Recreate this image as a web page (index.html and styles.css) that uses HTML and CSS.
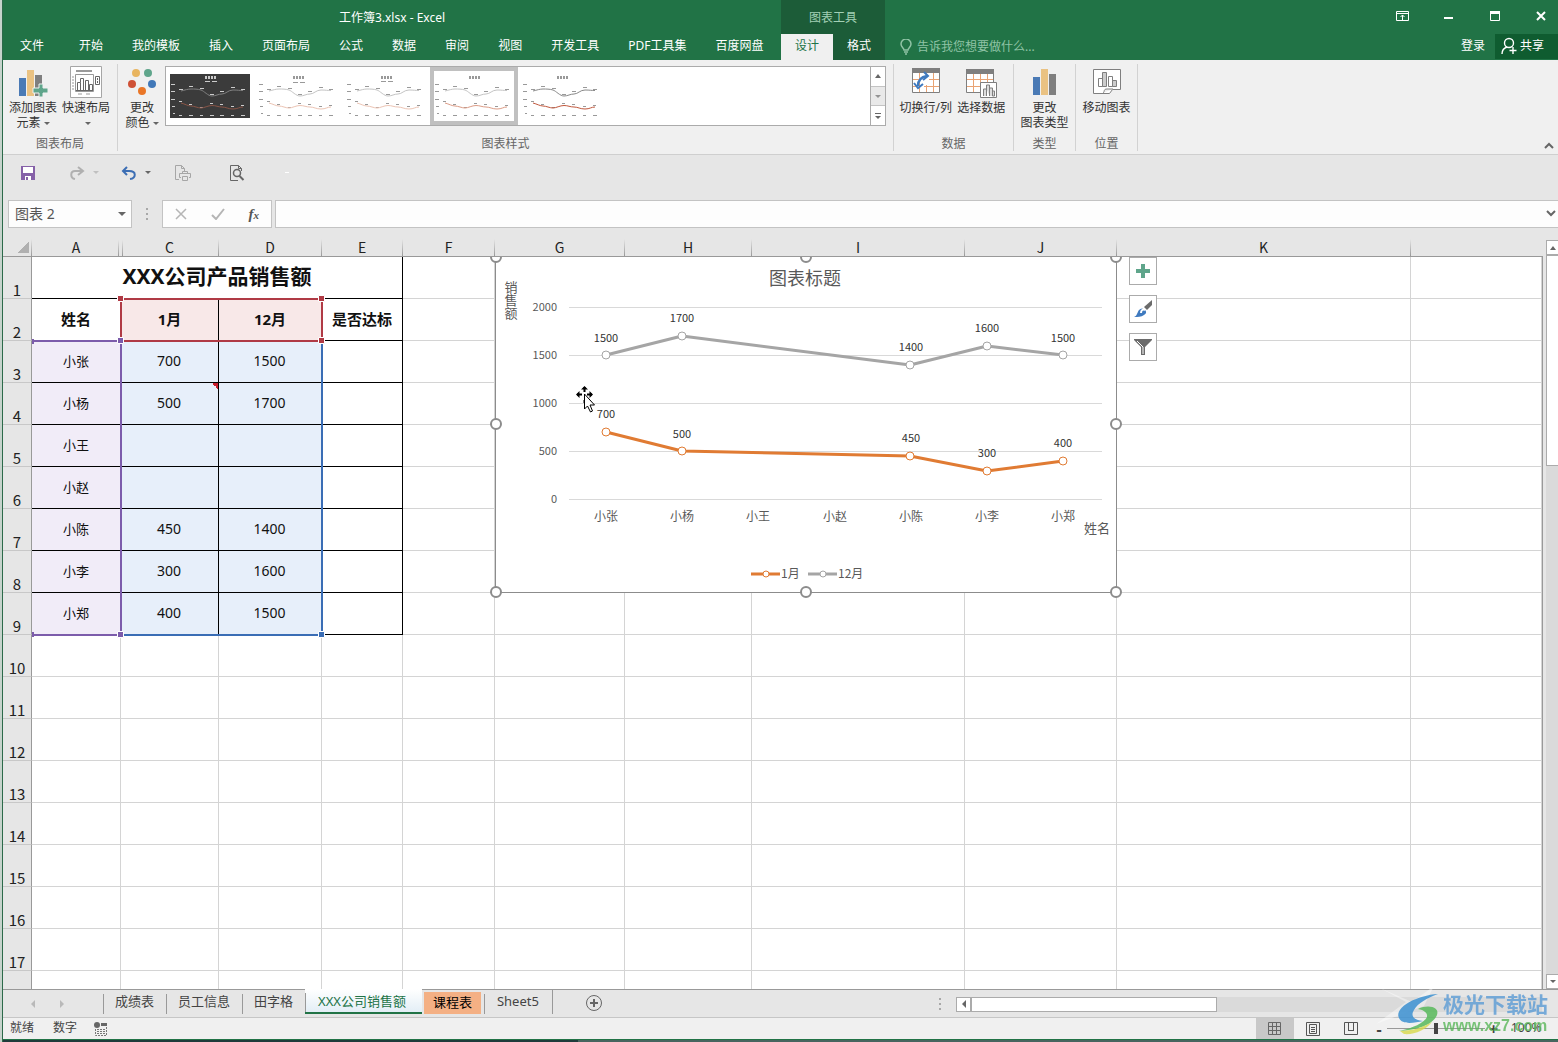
FILE: index.html
```html
<!DOCTYPE html>
<html lang="zh-CN">
<head>
<meta charset="utf-8">
<meta name="viewport" content="width=device-width, initial-scale=1">
<title>工作簿3.xlsx - Excel</title>
<link rel="stylesheet" href="styles.css">
</head>
<body>
<svg class="defs" aria-hidden="true">
  <symbol id="thumb-lines" viewBox="0 0 80 44">
    <g class="thumb-dash">
      <path d="M9 15.500h4M19 12.500h4M30 14.500h4M40 20.500h4M50 17.500h4M61 13.500h4M71 15.500h4"/>
      <path d="M9 27.500h3M19 30.500h3M30 33.500h3M40 29.500h3M50 30.500h3M61 32.500h3M71 31.500h3"/>
      <path d="M9 41.500h3M19 41.500h4M30 41.500h3M40 41.500h4M50 41.500h4M61 41.500h3M71 41.500h4"/>
      <path d="M1 10.500h4M1 17.500h4M1 25.500h4M2 32.500h3M3 39.500h2"/>
    </g>
    <path class="thumb-title" stroke-dasharray="2 1" d="M35 3.500h11"/>
    <path class="thumb-grey" d="M11 17C15 16 18 15 21 15S28 15 31 16S38 22 42 22S48 20 52 20S58 16 63 16S69 16.500 73 16.500"/>
    <path class="thumb-red" d="M11 29C15 30 18 32 21 32S28 34 31 34S38 31.500 42 31.500S48 33 52 33S58 35 63 35S69 33 73 33"/>
  </symbol>
  <symbol id="bars" viewBox="0 0 30 30"><path fill="#4a7ab5" d="M1 11h7v18H1z"/><path fill="#eac282" d="M9 3h7v26H9z"/><path fill="#7f7f7f" d="M17 8h7v21h-7z"/></symbol>
</svg>

<div class="window">
  <header class="titlebar">
    <div class="title-main">
      <h1 class="doc-title">工作簿3.xlsx - Excel</h1>
      <nav class="menu">
        <button class="menu-tab file">文件</button><button class="menu-tab">开始</button><button class="menu-tab">我的模板</button><button class="menu-tab">插入</button><button class="menu-tab">页面布局</button><button class="menu-tab">公式</button><button class="menu-tab">数据</button><button class="menu-tab">审阅</button><button class="menu-tab">视图</button><button class="menu-tab">开发工具</button><button class="menu-tab">PDF工具集</button><button class="menu-tab">百度网盘</button>
      </nav>
    </div>
    <div class="context">
      <div class="context-title">图表工具</div>
      <nav class="context-tabs"><button class="context-tab active">设计</button><button class="context-tab">格式</button></nav>
    </div>
    <div class="title-side">
      <div class="win-controls">
        <button aria-label="功能区显示选项"><svg width="16" height="16" viewBox="0 0 16 16" fill="none" stroke="#fff"><path d="M1.500 3.500h12v9h-12zM1 5.500h12M7.500 12V7M5.500 9l2-2 2 2"/></svg></button>
        <button aria-label="最小化"><svg width="16" height="16" viewBox="0 0 16 16"><path fill="#fff" d="M3 9h9v2H3z"/></svg></button>
        <button aria-label="最大化"><svg width="16" height="16" viewBox="0 0 16 16"><path d="M3.500 3.500h9v9h-9z" fill="none" stroke="#fff"/><path fill="#fff" d="M3 3h10v3H3z"/></svg></button>
        <button aria-label="关闭"><svg width="16" height="16" viewBox="0 0 16 16"><path d="M4 4l8 8M12 4l-8 8" stroke="#fff" stroke-width="2"/></svg></button>
      </div>
      <div class="account">
        <button class="tell-me"><svg width="12" height="16" viewBox="0 0 12 16" fill="none" stroke="#8fc3a5" stroke-width="1.500"><path d="M4 11c0-2-3-3-3-6a5 5 0 0 1 10 0c0 3-3 4-3 6zM4 13h4M5 15h2"/></svg>告诉我您想要做什么...</button>
        <button class="login">登录</button>
        <button class="share"><svg width="16" height="18" viewBox="0 0 16 18" fill="none" stroke="#fff" stroke-width="1.400"><circle cx="8" cy="6" r="4.500"/><path d="M1 17c0-4 2-6 5-7M12 10v7M8.500 13.500h7"/></svg>共享</button>
      </div>
    </div>
  </header>

  <section class="ribbon" aria-label="图表工具 设计">
    <div class="group layout-group">
      <div class="group-body">
        <button class="cmd w54"><svg width="30" height="32" viewBox="0 0 30 32"><use href="#bars" y="1" width="30" height="30"/><path d="M17 22h6v-4h4v4h5v5h-5v4h-4v-4h-6z" transform="translate(-2 0)" fill="#5fa58b" stroke="#f0f0f0"/></svg><span>添加图表<br>元素 <i class="caret"></i></span></button>
        <button class="cmd w52"><svg width="32" height="32" viewBox="0 0 32 32" fill="none"><path d="M.500.500h31v31H.500z" fill="#fff" stroke="#a6a6a6"/><path d="M6 5h16" stroke="#9a9a9a" stroke-width="2"/><path d="M5.500 8.500h18v17h-18zM2 11h2M2 14h2M2 17h2M2 20h2M2 23h2M8 28h4M16 28h4" stroke="#999"/><path d="M7.500 24.500v-8h3v8M10.500 16.500v-4h3v12M15.500 24.500v-10h3v10M19.500 24.500v-6h3v6zM6 24.500h17" stroke="#666"/><path d="M25.500 10.500h4v8h-4z" stroke="#666"/><path d="M27 12h1v2h-1zM27 15h1v2h-1z" fill="#666"/></svg><span>快速布局<br>&nbsp;<i class="caret"></i></span></button>
      </div>
      <div class="group-name">图表布局</div>
    </div>
    <div class="group style-group">
      <div class="group-body">
        <button class="cmd w40"><svg width="30" height="32" viewBox="0 0 30 32"><circle cx="9" cy="7" r="4" fill="#e8b560"/><circle cx="21" cy="7" r="4" fill="#5fa58b"/><circle cx="5" cy="18" r="4" fill="#cf5136"/><circle cx="25" cy="18" r="4" fill="#4178b8"/><circle cx="15" cy="25" r="4" fill="#e97627"/></svg><span>更改<br>颜色 <i class="caret"></i></span></button>
        <div class="gallery">
          <button class="style-item dark" aria-label="样式 1"><svg width="80" height="44"><use href="#thumb-lines"/><path class="thumb-dash" d="M35 7.500h5M42 7.500h5"/></svg></button>
          <button class="style-item" aria-label="样式 2"><svg width="80" height="44"><use href="#thumb-lines"/><path class="thumb-dash" d="M35 8.500h5M42 8.500h5"/></svg></button>
          <button class="style-item" aria-label="样式 3"><svg width="80" height="44"><use href="#thumb-lines"/><path class="thumb-dash" d="M35 7.500h5M42 7.500h5"/></svg></button>
          <button class="style-item selected" aria-label="样式 4"><svg width="80" height="44"><use href="#thumb-lines"/></svg></button>
          <button class="style-item strong" aria-label="样式 5"><svg width="80" height="44"><use href="#thumb-lines"/></svg></button>
          <div class="gallery-nav">
            <button aria-label="上一行"><i class="caret up"></i></button>
            <button class="off" aria-label="下一行"><i class="caret"></i></button>
            <button class="more" aria-label="更多"><i class="caret"></i></button>
          </div>
        </div>
      </div>
      <div class="group-name">图表样式</div>
    </div>
    <div class="group data-group">
      <div class="group-body">
        <button class="cmd w56"><svg width="30" height="32" viewBox="0 0 30 32" fill="none"><path d="M1.500 3.500h27v23h-27z" fill="#fff" stroke="#7f7f7f"/><path d="M1 2h28v5H1z" fill="#7f7f7f"/><path d="M8.500 7v19M15.500 7v3M15.500 19v7M22.500 7v19M2 13.500h8M18 13.500h10M2 20.500h4M13 20.500h15" stroke="#e9a374"/><path d="M7 20C7 14 10 11 16 10" stroke="#3f7abf" stroke-width="2.500"/><path d="M13 6l4 4-5 4M3 17l4 5 5-4" stroke="#3f7abf" stroke-width="2"/></svg><span>切换行/列</span></button>
        <button class="cmd w56"><svg width="32" height="32" viewBox="0 0 32 32" fill="none"><path d="M1.500 3.500h27v23h-27z" fill="#fff" stroke="#7f7f7f"/><path d="M1 3h28v5H1z" fill="#7f7f7f"/><path d="M8.500 8v18M15.500 8v18M22.500 8v8M2 13.500h26M2 20.500h13" stroke="#e9a374"/><path d="M15.500 16.500h16v15h-16z" fill="#fff" stroke="#7f7f7f"/><path d="M18.500 30v-7h3v7M21.500 23v-4h3v11M24.500 30v-8h3v8M27.500 30v-5h2v5z" fill="#ddd" stroke="#7f7f7f"/></svg><span>选择数据</span></button>
      </div>
      <div class="group-name">数据</div>
    </div>
    <div class="group type-group">
      <div class="group-body">
        <button class="cmd w56"><svg width="26" height="32" viewBox="0 0 26 32"><use href="#bars" width="30" height="30" y="0"/></svg><span>更改<br>图表类型</span></button>
      </div>
      <div class="group-name">类型</div>
    </div>
    <div class="group place-group">
      <div class="group-body">
        <button class="cmd w56"><svg width="30" height="32" viewBox="0 0 30 32" fill="none" stroke="#7f7f7f"><path d="M1.500 3.500h27v20h-8l-3 4h-16z" fill="#fff"/><path d="M11 27c2-1 0-4 4-4h6" fill="#eee"/><path d="M6.500 12.500h4v8h-4zM16.500 10.500h4v10h-4z" fill="#fff"/><path d="M10.500 6.500h4v14h-4zM20.500 14.500h4v6h-4z" fill="#ccc"/></svg><span>移动图表</span></button>
      </div>
      <div class="group-name">位置</div>
    </div>
    <button class="collapse" aria-label="折叠功能区"><svg width="10" height="8" viewBox="0 0 10 8"><path d="M1 6l4-4 4 4" fill="none" stroke="#666" stroke-width="2"/></svg></button>
  </section>

  <div class="quick" role="toolbar" aria-label="快速访问工具栏">
    <button class="q-save" aria-label="保存"><svg width="14" height="14" viewBox="0 0 14 14"><path fill="#8661a8" d="M0 0h14v14H0z"/><path fill="#fff" d="M2 1h10v6H2zM4 10h6v4H4z"/><path fill="#8661a8" d="M5 11h2v3H5z"/></svg></button>
    <button class="q-redo" aria-label="重做"><svg width="16" height="14" viewBox="0 0 16 14" fill="none" stroke="#b0b0b0" stroke-width="2"><path d="M9 1l5 4-5 4M14 5H6C1 5 1 12 6 13"/></svg><i class="caret faint"></i></button>
    <button class="q-undo" aria-label="撤消"><svg width="16" height="14" viewBox="0 0 16 14" fill="none" stroke="#3c6eb4" stroke-width="2"><path d="M6 1L2 5l4 4M2 5h6c8 0 7 7 1 8"/></svg><i class="caret"></i></button>
    <button class="q-print" aria-label="快速打印"><svg width="16" height="16" viewBox="0 0 16 16" fill="none" stroke="#a6a6a6"><path d="M4 14.500H.500V.500h6l3 3V6M6.500.500v3h3M7.500 9V6.500h5V9M6 12.500H4.500v-4h11v4H14M7.500 11.500h5v4h-5z"/></svg></button>
    <button class="q-view" aria-label="打印预览"><svg width="16" height="16" viewBox="0 0 16 16" fill="none" stroke="#666"><path d="M9 15.500H1.500V.500h8l3 3V6M9.500.500v3h3"/><circle cx="8" cy="8" r="3.500" stroke-width="1.500"/><path d="M10.500 11l4 4" stroke-width="2"/></svg></button>
    <span class="q-more"></span>
  </div>

  <div class="formula-bar">
    <label class="name-box"><input aria-label="名称框" value="图表 2"><i class="caret"></i></label>
    <span class="dots"></span>
    <div class="fx-buttons">
      <button aria-label="取消"><svg width="12" height="12" viewBox="0 0 12 12"><path d="M1 1l10 10M11 1L1 11" stroke="#b5b5b5" stroke-width="1.500"/></svg></button>
      <button aria-label="输入"><svg width="14" height="12" viewBox="0 0 14 12"><path d="M1 7l4 4 8-10" fill="none" stroke="#b5b5b5" stroke-width="2"/></svg></button>
      <button aria-label="插入函数" class="fx">f<sub>x</sub></button>
    </div>
    <div class="formula"><input aria-label="编辑栏"><svg width="10" height="8" viewBox="0 0 10 8"><path d="M1 1l4 4 4-4" fill="none" stroke="#666" stroke-width="2"/></svg></div>
  </div>

  <main class="sheet">
    <div class="pane">
      <table class="grid">
        <colgroup><col class="c-head"><col class="c-a"><col class="c-c"><col class="c-d"><col class="c-e"><col class="c-f"><col class="c-g"><col class="c-h"><col class="c-i"><col class="c-j"><col class="c-k"><col></colgroup>
        <thead><tr><th class="corner"></th><th class="hidden-next">A</th><th>C</th><th>D</th><th>E</th><th>F</th><th>G</th><th>H</th><th>I</th><th>J</th><th>K</th><th class="last"></th></tr></thead>
        <tbody>
          <tr class="r-title"><th>1</th><td colspan="4" class="b">XXX公司产品销售额</td><td></td><td></td><td></td><td></td><td></td><td></td><td></td></tr>
          <tr class="r-head"><th>2</th><td class="b">姓名</td><td class="b red">1月</td><td class="b red">12月</td><td class="b">是否达标</td><td></td><td></td><td></td><td></td><td></td><td></td><td></td></tr>
          <tr><th>3</th><td class="b name">小张</td><td class="b num">700</td><td class="b num">1500</td><td class="b"></td><td></td><td></td><td></td><td></td><td></td><td></td><td></td></tr>
          <tr><th>4</th><td class="b name">小杨</td><td class="b num note">500</td><td class="b num">1700</td><td class="b"></td><td></td><td></td><td></td><td></td><td></td><td></td><td></td></tr>
          <tr><th>5</th><td class="b name">小王</td><td class="b num"></td><td class="b num"></td><td class="b"></td><td></td><td></td><td></td><td></td><td></td><td></td><td></td></tr>
          <tr><th>6</th><td class="b name">小赵</td><td class="b num"></td><td class="b num"></td><td class="b"></td><td></td><td></td><td></td><td></td><td></td><td></td><td></td></tr>
          <tr><th>7</th><td class="b name">小陈</td><td class="b num">450</td><td class="b num">1400</td><td class="b"></td><td></td><td></td><td></td><td></td><td></td><td></td><td></td></tr>
          <tr><th>8</th><td class="b name">小李</td><td class="b num">300</td><td class="b num">1600</td><td class="b"></td><td></td><td></td><td></td><td></td><td></td><td></td><td></td></tr>
          <tr><th>9</th><td class="b name">小郑</td><td class="b num">400</td><td class="b num">1500</td><td class="b"></td><td></td><td></td><td></td><td></td><td></td><td></td><td></td></tr>
          <tr><th>10</th><td></td><td></td><td></td><td></td><td></td><td></td><td></td><td></td><td></td><td></td><td></td></tr>
          <tr><th>11</th><td></td><td></td><td></td><td></td><td></td><td></td><td></td><td></td><td></td><td></td><td></td></tr>
          <tr><th>12</th><td></td><td></td><td></td><td></td><td></td><td></td><td></td><td></td><td></td><td></td><td></td></tr>
          <tr><th>13</th><td></td><td></td><td></td><td></td><td></td><td></td><td></td><td></td><td></td><td></td><td></td></tr>
          <tr><th>14</th><td></td><td></td><td></td><td></td><td></td><td></td><td></td><td></td><td></td><td></td><td></td></tr>
          <tr><th>15</th><td></td><td></td><td></td><td></td><td></td><td></td><td></td><td></td><td></td><td></td><td></td></tr>
          <tr><th>16</th><td></td><td></td><td></td><td></td><td></td><td></td><td></td><td></td><td></td><td></td><td></td></tr>
          <tr><th>17</th><td></td><td></td><td></td><td></td><td></td><td></td><td></td><td></td><td></td><td></td><td></td></tr>
          <tr><th></th><td></td><td></td><td></td><td></td><td></td><td></td><td></td><td></td><td></td><td></td><td></td></tr>
        </tbody>
      </table>

      <div class="canvas">
        <!-- chart source ranges: names, series titles, values -->
        <svg class="ranges" width="330" height="390" viewBox="0 0 330 390" aria-hidden="true">
          <g fill="none" stroke-width="2">
            <path stroke="#3a6db5" d="M119 378h200V85"/>
            <path stroke="#7c5cab" d="M30 84h88v294H30"/>
            <path stroke="#b03a45" d="M118 42h201v42H118z"/>
          </g>
          <g stroke="#fff">
            <path fill="#b03a45" d="M114.500 38.500h6v6h-6zM315.500 38.500h6v6h-6zM315.500 80.500h6v6h-6z"/>
            <path fill="#7c5cab" d="M114.500 80.500h6v6h-6zM114.500 374.500h6v6h-6z"/>
            <path fill="#3a6db5" d="M315.500 374.500h6v6h-6z"/>
          </g>
          <path fill="#7c5cab" d="M29 82h2v5h-2zM29 375h2v5h-2z"/>
        </svg>

        <svg class="chart" width="622" height="336" viewBox="0 0 622 336" role="img" aria-label="图表标题">
          <path d="M.500-2h621v337.500H.500z" fill="#fff" stroke="#8c8c8c"/>
          <path d="M74 50.500h533M74 98.500h533M74 146.500h533M74 194.500h533M74 242.500h533" stroke="#d9d9d9"/>
          <g fill="none" stroke-width="3" stroke-linejoin="round">
            <path stroke="#a5a5a5" d="M111 98L187 79L415 108L492 89L568 98M313 317h29"/>
            <path stroke="#e07b33" d="M111 175L187 194L415 199L492 214L568 204M256 317h29"/>
          </g>
          <g fill="#fff" stroke="#a5a5a5">
            <circle cx="111" cy="98" r="4"/><circle cx="187" cy="79" r="4"/><circle cx="415" cy="108" r="4"/><circle cx="492" cy="89" r="4"/><circle cx="568" cy="98" r="4"/><circle cx="328" cy="317" r="3"/>
          </g>
          <g fill="#fff" stroke="#e07b33">
            <circle cx="111" cy="175" r="4"/><circle cx="187" cy="194" r="4"/><circle cx="415" cy="199" r="4"/><circle cx="492" cy="214" r="4"/><circle cx="568" cy="204" r="4"/><circle cx="271" cy="317" r="3"/>
          </g>
          <text class="ct-title" x="310" y="28">图表标题</text>
          <g class="ct-y"><text x="62" y="54">2000</text><text x="62" y="102">1500</text><text x="62" y="150">1000</text><text x="62" y="198">500</text><text x="62" y="246">0</text></g>
          <g class="ct-x"><text x="111" y="264">小张</text><text x="187" y="264">小杨</text><text x="263" y="264">小王</text><text x="340" y="264">小赵</text><text x="416" y="264">小陈</text><text x="492" y="264">小李</text><text x="568" y="264">小郑</text></g>
          <g class="ct-label">
            <text x="111" y="85">1500</text><text x="187" y="65">1700</text><text x="416" y="94">1400</text><text x="492" y="75">1600</text><text x="568" y="85">1500</text>
            <text x="111" y="161">700</text><text x="187" y="181">500</text><text x="416" y="185">450</text><text x="492" y="200">300</text><text x="568" y="190">400</text>
          </g>
          <g class="ct-axis"><text class="ct-vertical" x="16" y="24">销售额</text><text x="589" y="276">姓名</text></g>
          <g class="ct-legend"><text x="286" y="321">1月</text><text x="343" y="321">12月</text></g>
          <g fill="#fff" stroke="#8c8c8c" stroke-width="2">
            <circle cx="1" cy="0" r="5"/><circle cx="311" cy="0" r="5"/><circle cx="621" cy="0" r="5"/><circle cx="1" cy="167" r="5"/><circle cx="621" cy="167" r="5"/><circle cx="1" cy="335" r="5"/><circle cx="311" cy="335" r="5"/><circle cx="621" cy="335" r="5"/>
          </g>
        </svg>

        <div class="chart-tools">
          <button aria-label="图表元素"><svg width="16" height="16" viewBox="0 0 16 16"><path fill="#5fa58b" d="M6 1h4v5h5v4h-5v5H6v-5H1V6h5z"/></svg></button>
          <button aria-label="图表样式"><svg width="20" height="20" viewBox="0 0 20 20"><path fill="#6b6b6b" d="M19 1v5l-5 5-3-3z"/><path fill="#3f7abf" d="M1 18c3-1 3-4 5-7 2-2 4-2 6 0s1 4-1 5c-3 2-6 2-10 2z"/><path d="M8 14c0-3 2-4 4-3" fill="none" stroke="#fff" stroke-width="2"/></svg></button>
          <button aria-label="图表筛选器"><svg width="20" height="20" viewBox="0 0 20 20"><path fill="#6b6b6b" d="M1 2h18v1l-7 7v8H8v-8L1 3z"/><path d="M4 4l6 6v7" fill="none" stroke="#fff"/></svg></button>
        </div>

        <svg class="cursor" width="20" height="28" viewBox="0 0 20 28" aria-hidden="true"><path d="M8.500 1v5M8.500 14v3M1 8.500h5M11 8.500h5" stroke="#000" stroke-width="2"/><path d="M5 3.500L8.500 0 12 3.500zM3.500 5L0 8.500 3.500 12zM13.500 5l3.500 3.500-3.500 3.500z"/><path d="M8.500 8v15l3-3 3 6 2-1-2.500-6h4.500z" fill="#fff" stroke="#000"/></svg>
      </div>
    </div>
    <div class="vscroll">
      <button aria-label="向上滚动"><i class="caret up"></i></button>
      <div class="v-thumb"></div>
      <button class="v-down" aria-label="向下滚动"><i class="caret"></i></button>
    </div>
  </main>

  <div class="tabs-row">
    <div class="tab-nav"><button aria-label="上一工作表"><i class="caret left"></i></button><button aria-label="下一工作表"><i class="caret right"></i></button></div>
    <nav class="sheet-tabs">
      <button>成绩表</button><button>员工信息</button><button>田字格</button><button class="current">XXX公司销售额</button><button class="orange">课程表</button><button>Sheet5</button>
    </nav>
    <button class="add-sheet" aria-label="新工作表"><svg width="18" height="18" viewBox="0 0 18 18" fill="none" stroke="#666"><circle cx="9" cy="9" r="7.500"/><path d="M9 5v8M5 9h8" stroke-width="2"/></svg></button>
    <div class="hscroll"><span class="dots"></span><button aria-label="向左滚动"><i class="caret left"></i></button><div class="h-track"><div class="h-thumb"></div></div></div>
  </div>

  <footer class="status">
    <span>就绪</span><span>数字</span>
    <svg class="macro" width="14" height="14" viewBox="0 0 14 14"><circle cx="3" cy="3" r="3" fill="#666"/><path d="M7 1h6v3H7z" fill="#666"/><path d="M1.500 7v6.500h11V4.500M3 7.500h9M3 9.500h9M3 11.500h9" fill="none" stroke="#777" stroke-dasharray="2 1"/></svg>
    <div class="views">
      <button class="on" aria-label="普通"><svg width="14" height="14" viewBox="0 0 14 14" fill="none" stroke="#666"><path d="M.500.500h12v12H.500zM4.500 0v13M8.500 0v13M0 4.500h13M0 8.500h13"/></svg></button>
      <button aria-label="页面布局"><svg width="14" height="14" viewBox="0 0 14 14" fill="none" stroke="#555"><path d="M.500.500h13v13H.500zM3.500 2.500h7v9h-7zM5 5.500h4M5 7.500h4M5 9.500h4"/></svg></button>
      <button aria-label="分页预览"><svg width="14" height="14" viewBox="0 0 14 14" fill="none" stroke="#555"><path d="M.500.500h13v12H.500zM4.500 1v8M9.500 1v8M4 8.500h6"/></svg></button>
    </div>
    <div class="zoom"><button aria-label="缩小">-</button><input type="range" min="10" max="190" value="100" aria-label="缩放"><button aria-label="放大">+</button><span>100%</span></div>
  </footer>
  <div class="desk-edge"></div>
</div>

<aside class="watermark">
  <svg width="190" height="56" viewBox="0 0 190 56" aria-hidden="true">
    <path d="M12 6l32 14 22-16-10 20L8 42l30-22z" fill="#fff" opacity=".4"/>
    <path d="M70 12C50 13 26 25 31 36c3 7 15 5 24 3-9-1-13-5-9-11 4-7 13-12 24-16z" fill="#3b8fd0" opacity=".85"/>
    <path d="M50 27c10-5 22-2 19 6-4 10-20 15-38 16 14-3 25-8 28-14 1-4-3-7-9-8z" fill="#57b95b" opacity=".85"/>
    <path d="M32 49c12 0 24-4 32-9-6 8-18 13-28 12z" fill="#d8d94a" opacity=".8"/>
  </svg>
  <div class="wm-text"><b>极光下载站</b><span>www.xz7.com</span></div>
</aside>
</body>
</html>
```
FILE: styles.css
```css
* { box-sizing: border-box; }
body {
  margin: 0;
  padding-left: 2px;
  min-height: 100vh;
  background: #c6d3cc;
  color: #333;
  font: 12px/16px "Noto Sans", "Noto Sans CJK SC", sans-serif;
}
button, input { font: inherit; color: inherit; }
button { border: 0; padding: 0; background: none; }
svg { display: block; flex: none; }
.defs { position: absolute; width: 0; height: 0; }
.window {
  height: 100vh;
  display: flex;
  flex-direction: column;
  border-left: 1px solid #2c6a4a;
  background: #e6e6e6;
  overflow: hidden;
}
.caret {
  display: inline-block;
  border: 3px solid transparent;
  border-top-color: #666;
  border-bottom: 0;
  vertical-align: middle;
}
.caret.up { border: 3px solid transparent; border-bottom: 4px solid #666; border-top: 0; }
.caret.left { border: 4px solid transparent; border-right-color: #666; border-left: 0; }
.caret.right { border: 4px solid transparent; border-left-color: #666; border-right: 0; }
.caret.faint { border-top-color: #c0c0c0; }
.dots { width: 2px; height: 12px; background: repeating-linear-gradient(#a8a8a8 0 2px, transparent 2px 5px); }

/* title bar */
.titlebar { display: flex; height: 60px; flex: none; background: #217346; color: #fff; }
.title-main { width: 778px; flex: none; }
.doc-title { margin: 0; height: 34px; font-size: 12px; font-weight: 400; line-height: 36px; text-align: center; }
.menu { display: flex; gap: 1px; height: 26px; }
.menu-tab { padding: 0 14px 2px; white-space: nowrap; }
.menu-tab.file { padding: 0 20px 2px 17px; }
.context { width: 104px; flex: none; background: #1c5c38; }
.context-title { height: 34px; line-height: 36px; text-align: center; color: #a3d0b5; }
.context-tabs { display: flex; height: 26px; }
.context-tab { flex: 1; padding-bottom: 2px; }
.context-tab.active { background: #f0f0f0; color: #217346; }
.title-side { flex: 1; display: flex; flex-direction: column; }
.win-controls { display: flex; justify-content: flex-end; align-items: center; gap: 30px; height: 34px; padding: 0 9px 2px 0; }
.account { display: flex; height: 25px; }
.tell-me { display: flex; align-items: center; gap: 5px; margin: 0 auto 0 15px; color: #8fc3a5; }
.login { padding: 0 10px 2px; }
.share { display: flex; align-items: center; gap: 3px; width: 63px; padding: 0 0 2px 6px; background: #0f5c30; }

/* ribbon */
.ribbon { position: relative; display: flex; flex: none; height: 95px; padding: 4px 0 3px; background: #f0f0f0; border-bottom: 1px solid #cfcfcf; }
.group { display: flex; flex-direction: column; justify-content: space-between; border-right: 1px solid #d2d2d2; }
.group-body { display: flex; padding: 2px 4px 0; }
.group-name { color: #666; text-align: center; line-height: 15px; }
.layout-group { width: 115px; }
.layout-group .group-body { padding-left: 3px; }
.style-group { width: 776px; }
.style-group .group-body { gap: 3px; }
.data-group { width: 120px; }
.type-group, .place-group { width: 62px; }
.type-group .group-body, .place-group .group-body { padding: 2px 0 0; justify-content: center; }
.cmd { display: flex; flex-direction: column; align-items: center; gap: 2px; height: 66px; line-height: 15px; white-space: nowrap; }
.w40 { width: 40px; }
.w52 { width: 52px; }
.w54 { width: 54px; }
.w56 { width: 56px; }
.gallery { display: flex; width: 721px; height: 60px; border: 1px solid #ababab; background: #fff; }
.style-item { width: 88px; height: 58px; display: flex; align-items: center; justify-content: center; --g: #c4c4c4; --r: #ecc4b4; --d: #999; }
.style-item.dark { --g: #808080; --r: #8a5547; --d: #ccc; }
.style-item.dark svg { background: #3b3b3b; }
.style-item.selected { border: 4px solid #c0c0c0; --r: #dc9c86; }
.style-item.strong { --g: #888; --r: #c0573c; }
.thumb-dash, .thumb-title, .thumb-grey, .thumb-red { fill: none; stroke: var(--d); }
.thumb-title { stroke-width: 3; }
.thumb-grey { stroke: var(--g); }
.thumb-red { stroke: var(--r); }
.gallery-nav { width: 15px; margin-left: auto; display: flex; flex-direction: column; border-left: 1px solid #ababab; }
.gallery-nav button { flex: 1; display: flex; align-items: center; justify-content: center; }
.gallery-nav .off { background: #e1e1e1; border: 1px solid #ababab; border-width: 1px 0; opacity: .7; }
.gallery-nav .more { flex-direction: column; gap: 2px; }
.gallery-nav .more::before { content: ""; width: 6px; height: 1px; background: #666; }
.collapse { position: absolute; right: 4px; bottom: 4px; }

/* quick access bar */
.quick { display: flex; align-items: center; flex: none; height: 35px; padding-left: 18px; }
.quick button { display: flex; align-items: center; gap: 8px; }
.q-save { margin-right: 34px; }
.q-redo { margin-right: 22px; }
.q-undo { margin-right: 24px; }
.q-print { margin-right: 38px; }
.q-view { margin-right: 40px; }
.q-more { width: 4px; height: 1px; background: #fff; }

/* formula bar */
.formula-bar { display: flex; align-items: center; flex: none; height: 45px; padding: 10px 0 7px 5px; }
.name-box { display: flex; align-items: center; width: 124px; height: 28px; padding: 0 5px 0 6px; border: 1px solid #c3c3c3; background: #fdfdfd; }
.name-box input { flex: 1; min-width: 0; border: 0; padding: 0; background: none; font-size: 14px; color: #555; }
.name-box .caret { border-width: 4px 4px 0; }
.formula-bar .dots { margin: 0 14px; }
.fx-buttons { display: flex; align-items: center; justify-content: space-around; width: 110px; height: 28px; border: 1px solid #c3c3c3; background: #fdfdfd; }
.fx { font: italic bold 15px/16px "Liberation Serif", serif; color: #555; }
.fx sub { font-size: 11px; vertical-align: baseline; }
.formula { display: flex; align-items: center; flex: 1; height: 28px; margin-left: 3px; padding-right: 2px; border: 1px solid #c3c3c3; border-right: 0; background: #fdfdfd; }
.formula input { flex: 1; border: 0; background: none; }

/* worksheet */
.sheet { flex: 1; min-height: 0; display: flex; }
.pane { position: relative; flex: 1; overflow: hidden; background: linear-gradient(#999, #999) right 21px / 1px 100% no-repeat; padding-right: 1px; }
.grid { width: 100%; table-layout: fixed; border-collapse: separate; border-spacing: 0; }
.c-head { width: 29px; }
.c-a { width: 89px; }
.c-c { width: 98px; }
.c-d { width: 103px; }
.c-e { width: 81px; }
.c-f { width: 92px; }
.c-g { width: 130px; }
.c-h { width: 127px; }
.c-i { width: 213px; }
.c-j { width: 152px; }
.c-k { width: 294px; }
.grid th { padding: 0; font-family: "Noto Sans CJK SC", sans-serif; font-weight: 400; color: #222; }
.grid thead th { height: 22px; padding: 4px 1px 0 0; border-bottom: 1px solid #999; background: linear-gradient(#e6e6e6, #999) right bottom / 1px 17px no-repeat #e6e6e6; font-size: 14px; line-height: 17px; }
.grid thead .last { background: #e6e6e6; }
.grid thead .hidden-next { position: relative; background: #e6e6e6; }
.hidden-next::after { content: ""; position: absolute; right: -2px; top: 5px; bottom: 0; width: 5px; background: linear-gradient(#e6e6e6, #999) left / 1px 100% no-repeat, linear-gradient(#e6e6e6, #999) right / 1px 100% no-repeat; }
.grid thead .corner { background: linear-gradient(135deg, #e6e6e6 50%, #b0b0b0 50%) 15px 7px / 11px 11px no-repeat, linear-gradient(#e6e6e6, #999) right bottom / 1px 17px no-repeat #e6e6e6; }
.grid tbody th { height: 42px; border-right: 1px solid #999; border-bottom: 1px solid #c8c8c8; background: #e6e6e6; font-size: 15px; line-height: 16px; vertical-align: bottom; }
.grid td { height: 42px; padding: 0 0 2px; border: 1px solid #d4d4d4; border-width: 0 1px 1px 0; background: #fff; text-align: center; vertical-align: middle; font-size: 13px; line-height: 20px; color: #111; }
.grid td.b { border-color: #000; }
.grid .r-title .b { padding-bottom: 4px; font-size: 21px; font-weight: 700; }
.grid .r-head .b { font-size: 15px; font-weight: 700; }
.grid .red { background: #f8e8e8; }
.grid .name { background: #f1ecf8; }
.grid .num { padding-right: 1px; background: #e7effa; font-size: 14px; }
.grid .note { background: linear-gradient(45deg, transparent 50%, #c8202f 50%) right top / 6px 6px no-repeat #e7effa; }
.canvas { position: absolute; inset: 22px 0 0 0; overflow: hidden; pointer-events: none; }
.ranges { position: absolute; left: 0; top: 0; }
.chart { position: absolute; left: 492px; top: 0; overflow: visible; font: 11px "Noto Sans CJK SC", sans-serif; fill: #595959; }
.ct-title { font-size: 18px; text-anchor: middle; }
.ct-y { text-anchor: end; }
.ct-x { font-size: 12px; text-anchor: middle; }
.ct-label { text-anchor: middle; fill: #333; }
.ct-axis { font-size: 13px; }
.ct-vertical { writing-mode: vertical-rl; }
.ct-legend { font-size: 12px; }
.chart-tools { position: absolute; left: 1126px; top: 0; display: flex; flex-direction: column; gap: 10px; pointer-events: auto; }
.chart-tools button { width: 28px; height: 28px; display: grid; place-items: center; border: 1px solid #ababab; background: #fff; }
.cursor { position: absolute; left: 573px; top: 129px; }

.vscroll { display: flex; flex-direction: column; width: 15px; padding: 5px 0 0 3px; background: linear-gradient(#dadada, #dadada) 3px 5px no-repeat #e6e6e6; }
.vscroll button { display: grid; place-items: center; height: 15px; border: 1px solid #ababab; border-right: 0; background: #fff; }
.v-thumb { height: 211px; border: 1px solid #ababab; border-right: 0; background: #fff; }
.v-down { margin-top: auto; }

/* sheet tabs */
.tabs-row { display: flex; flex: none; height: 28px; border-top: 1px solid #999; color: #444; font-size: 13px; }
.tab-nav { display: flex; gap: 25px; width: 100px; padding-left: 28px; opacity: .35; }
.tab-nav button { height: 25px; }
.sheet-tabs { display: flex; height: 24px; }
.sheet-tabs button { position: relative; padding: 0 12px 2px; white-space: nowrap; }
.sheet-tabs button::before { content: ""; position: absolute; left: 0; top: 4px; bottom: 0; width: 1px; background: #999; }
.sheet-tabs .current { margin-top: -1px; padding: 0 16px 0 13px; border-bottom: 2px solid #217346; background: linear-gradient(#fff, #e3eef6); color: #217346; }
.sheet-tabs .orange { margin: 2px 3px 0 2px; padding: 0 9px 3px; background: #f4b084; color: #000; }
.sheet-tabs .orange::before { display: none; }
.sheet-tabs button:last-child { padding: 0 13px 2px; border-right: 1px solid #999; }
.add-sheet { margin-left: 32px; height: 26px; }
.hscroll { display: flex; align-items: center; width: 619px; height: 28px; margin-left: auto; }
.hscroll .dots { margin-right: 15px; }
.hscroll button { display: grid; place-items: center; width: 15px; height: 15px; border: 1px solid #ababab; background: #fff; }
.h-track { flex: 1; background: #dadada; margin-right: 16px; }
.h-thumb { width: 246px; height: 15px; border: 1px solid #ababab; background: #fff; }

/* status bar */
.status { display: flex; align-items: center; flex: none; height: 23px; padding-left: 7px; border-top: 1px solid #c6c6c6; border-bottom: 1px solid #217346; background: #f0f0f0; color: #444; }
.status > span { margin-right: 19px; padding-bottom: 2px; }
.macro { margin-left: -2px; }
.views { display: flex; height: 21px; margin-left: auto; }
.views button { width: 38px; display: grid; place-items: center; }
.views .on { background: #c8c8c8; }
.zoom { display: flex; align-items: center; width: 188px; padding-left: 5px; }
.zoom button { width: 8px; font-size: 16px; font-weight: 700; }
.zoom input { appearance: none; width: 98px; height: 12px; margin: 0 4px; background: linear-gradient(#999, #999) center / 100% 1px no-repeat; }
.zoom input::-webkit-slider-thumb { appearance: none; width: 4px; height: 11px; background: #444; }
.zoom span { margin-left: 14px; padding-bottom: 2px; }
.desk-edge { flex: none; height: 2px; background: linear-gradient(90deg, #1f3b3b 37%, #47655f 37%); }

.watermark { position: fixed; right: 0; bottom: 4px; width: 190px; height: 56px; pointer-events: none; }
.wm-text { position: absolute; right: 10px; top: 10px; display: flex; flex-direction: column; opacity: .8; }
.wm-text b { font-size: 21px; line-height: 24px; color: #5b9bd5; }
.wm-text span { font: 700 16px/20px "Liberation Sans", sans-serif; color: #5bb75b; }
```
